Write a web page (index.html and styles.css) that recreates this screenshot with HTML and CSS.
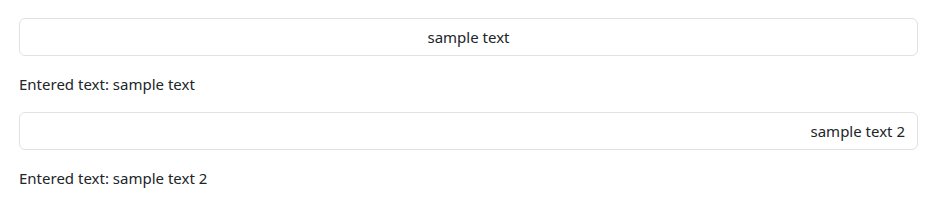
FILE: index.html
```html
<!DOCTYPE html>
<html>
<head>
<meta charset="utf-8">
<link rel="stylesheet" href="styles.css">
</head>
<body>
<div class="page">
  <input class="field center" type="text" value="sample text">
  <p class="echo">Entered text: sample text</p>
  <input class="field right" type="text" value="sample text 2">
  <p class="echo last">Entered text: sample text 2</p>
</div>
</body>
</html>
```
FILE: styles.css
```css
html, body {
  margin: 0;
  background: #fff;
}
.page {
  padding: 18px 19px 0;
  font-family: "Noto Sans", "Open Sans", sans-serif;
  font-size: 15px;
  line-height: 24px;
  color: #212529;
  display: flex;
  flex-direction: column;
}
.field {
  box-sizing: border-box;
  width: 100%;
  height: 38px;
  margin: 0;
  padding: 6px 12px;
  border: 1px solid #dee2e6;
  border-radius: 6px;
  font-family: inherit;
  font-size: 15px;
  line-height: 24px;
  color: #212529;
  background: #fff;
  outline: none;
}
.center { text-align: center; }
.right { text-align: right; }
.echo {
  margin: 16px 0;
}
.echo.last {
  margin-bottom: 0;
}
```
